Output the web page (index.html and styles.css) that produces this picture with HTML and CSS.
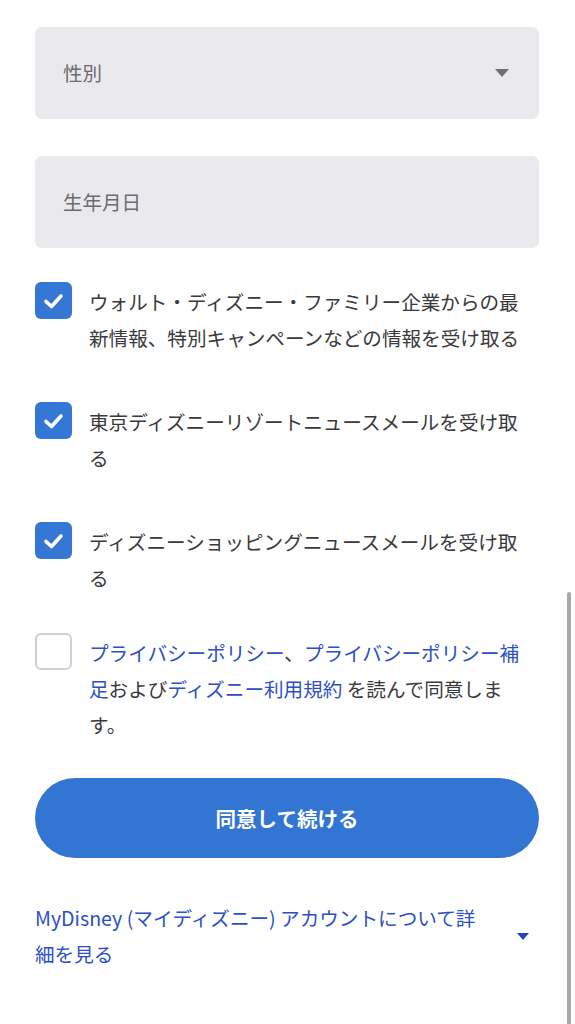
FILE: index.html
```html
<!DOCTYPE html>
<html lang="ja">
<head>
<meta charset="utf-8">
<title>MyDisney</title>
<link rel="stylesheet" href="styles.css">
</head>
<body>
<main class="page">
  <div class="fields">
    <div class="field">
      <span class="field-label">性別</span>
      <svg class="field-caret" width="14" height="8" viewBox="0 0 14 8"><path d="M0 0H14L7 8Z" fill="#6e6e73"/></svg>
    </div>
    <div class="field">
      <span class="field-label">生年月日</span>
    </div>
  </div>

  <div class="checks">
    <label class="check">
      <span class="box box-on"><svg width="37" height="37" viewBox="0 0 37 37"><path d="M11 19.5L16.5 24.5L26 14" fill="none" stroke="#fff" stroke-width="3.6" stroke-linecap="round" stroke-linejoin="round"/></svg></span>
      <span class="check-text">ウォルト・ディズニー・ファミリー企業からの最新情報、特別キャンペーンなどの情報を受け取る</span>
    </label>
    <label class="check">
      <span class="box box-on"><svg width="37" height="37" viewBox="0 0 37 37"><path d="M11 19.5L16.5 24.5L26 14" fill="none" stroke="#fff" stroke-width="3.6" stroke-linecap="round" stroke-linejoin="round"/></svg></span>
      <span class="check-text">東京ディズニーリゾートニュースメールを受け取る</span>
    </label>
    <label class="check">
      <span class="box box-on"><svg width="37" height="37" viewBox="0 0 37 37"><path d="M11 19.5L16.5 24.5L26 14" fill="none" stroke="#fff" stroke-width="3.6" stroke-linecap="round" stroke-linejoin="round"/></svg></span>
      <span class="check-text">ディズニーショッピングニュースメールを受け取る</span>
    </label>
  </div>

  <label class="check consent">
    <span class="box box-off"></span>
    <span class="check-text"><a class="link">プライバシーポリシー</a>、<a class="link">プライバシーポリシー補足</a>および<a class="link">ディズニー利用規約</a> を読んで同意します。</span>
  </label>

  <button class="primary">同意して続ける</button>

  <div class="more">
    <span class="more-text">MyDisney (マイディズニー) アカウントについて詳細を見る</span>
    <svg class="more-caret" width="12" height="7" viewBox="0 0 12 7"><path d="M0 0H12L6 7Z" fill="#2343c0"/></svg>
  </div>
</main>
<div class="scrollbar"></div>
</body>
</html>
```

FILE: styles.css
```css
html, body {
  margin: 0;
  padding: 0;
  background: #ffffff;
}

body {
  font-family: "Noto Sans CJK JP", "Noto Sans", sans-serif;
  color: #3a3a3c;
  width: 575px;
  height: 1024px;
  overflow: hidden;
}

.page {
  padding: 27px 36px 0 35px;
}

.fields {
  display: flex;
  flex-direction: column;
  gap: 37px;
}

.field {
  height: 92px;
  background: #e9e9ee;
  border-radius: 7px;
  display: flex;
  align-items: center;
  justify-content: space-between;
  padding: 0 30px 0 28px;
}

.field-label {
  font-size: 19.5px;
  color: #6b6b70;
  line-height: 1;
}

.field-caret {
  display: block;
}

.checks {
  margin-top: 34px;
  display: flex;
  flex-direction: column;
  gap: 46px;
}

.check {
  display: flex;
  align-items: flex-start;
  gap: 17px;
}

.box {
  flex: 0 0 auto;
  width: 37px;
  height: 37px;
  box-sizing: border-box;
  border-radius: 6px;
  display: block;
}

.box svg {
  display: block;
}

.box-on {
  background: #3577d5;
}

.box-off {
  border: 2.5px solid #d0d0d2;
  background: #fff;
}

.check-text {
  font-size: 19.6px;
  line-height: 36px;
  padding-top: 2px;
  width: 440px;
  color: #3a3a3c;
}

.consent {
  margin-top: 37px;
}

.link {
  color: #2d4fc6;
  text-decoration: none;
}

.primary {
  display: block;
  width: 100%;
  height: 80px;
  margin-top: 35px;
  border: none;
  border-radius: 40px;
  background: #3275d3;
  color: #ffffff;
  font-family: "Noto Sans CJK JP", "Noto Sans", sans-serif;
  font-size: 20.5px;
  font-weight: 700;
  padding: 0;
}

.more {
  margin-top: 42px;
  display: flex;
  align-items: center;
  justify-content: space-between;
  padding-right: 10px;
}

.more-text {
  width: 452px;
  font-size: 19.6px;
  line-height: 36px;
  color: #2d4fc6;
}

.more-caret {
  display: block;
}

.scrollbar {
  position: fixed;
  right: 4px;
  top: 592px;
  width: 4px;
  height: 440px;
  background: #a9a9a9;
  border-radius: 2px;
}
```
